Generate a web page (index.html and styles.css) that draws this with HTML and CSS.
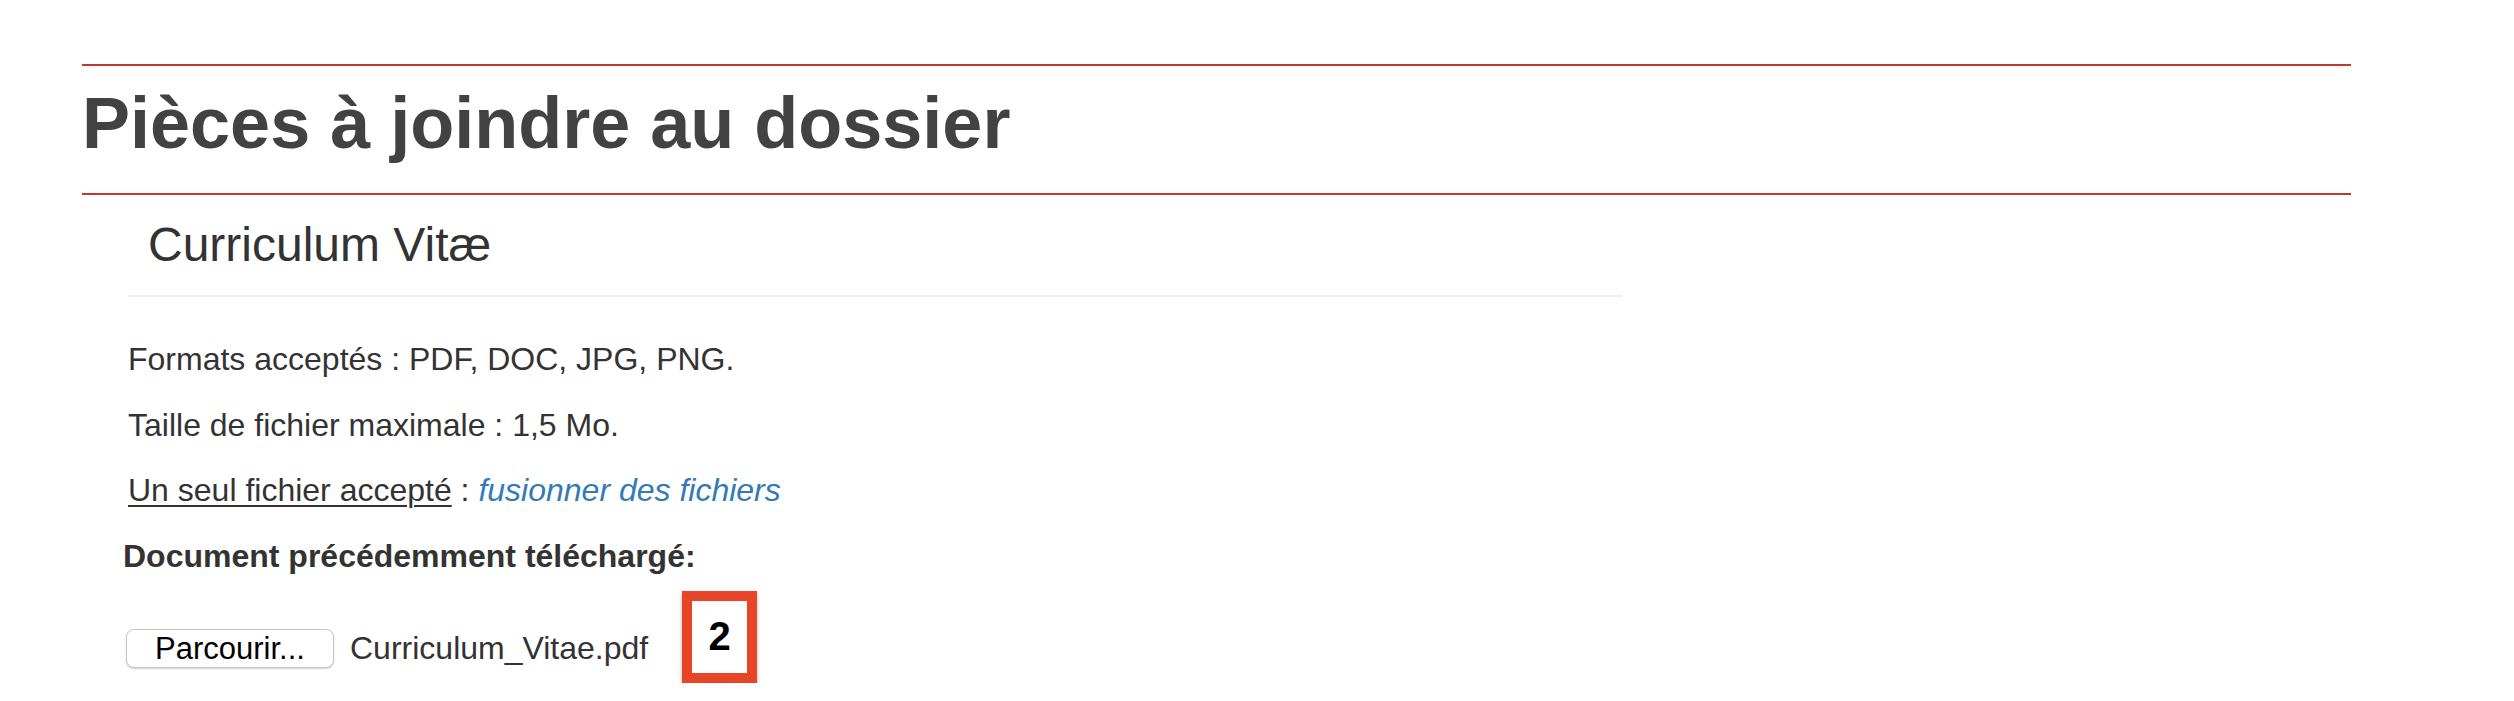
FILE: index.html
```html
<!DOCTYPE html>
<html lang="fr">
<head>
<meta charset="utf-8">
<title>Pièces à joindre au dossier</title>
<link rel="stylesheet" href="styles.css">
</head>
<body>
<div class="page">
  <section class="section">
    <h2 class="section-title">Pièces à joindre au dossier</h2>
    <div class="piece">
      <h3 class="piece-title">Curriculum Vitæ</h3>
      <p class="info">Formats acceptés : PDF, DOC, JPG, PNG.</p>
      <p class="info">Taille de fichier maximale : 1,5 Mo.</p>
      <p class="info"><span class="underlined">Un seul fichier accepté</span> : <a class="merge-link" href="#">fusionner des fichiers</a></p>
      <div class="label">Document précédemment téléchargé:</div>
      <div class="file-row">
        <button class="browse" type="button">Parcourir...</button>
        <span class="file-name">Curriculum_Vitae.pdf</span>
        <span class="badge">2</span>
      </div>
    </div>
  </section>
</div>
</body>
</html>
```
FILE: styles.css
```css
html, body {
  margin: 0;
  padding: 0;
  background: #ffffff;
}

body {
  font-family: "Liberation Sans", Arial, Helvetica, sans-serif;
  color: #333333;
}

.page {
  padding: 64px 0 0 82px;
}

.section {
  width: 2269px;
}

.section-title {
  margin: 0;
  border-top: 2px solid #c0392b;
  border-bottom: 2px solid #c0392b;
  padding: 17px 0 30px 0;
  font-size: 72px;
  line-height: 80px;
  font-weight: bold;
  color: #424242;
}

.piece {
  margin-left: 46px;
  width: 1494px;
}

.piece-title {
  margin: 24px 0 0 0;
  padding: 0 0 24px 20px;
  border-bottom: 2px solid #eeeeee;
  font-size: 48px;
  line-height: 52px;
  font-weight: normal;
  color: #333333;
}

.info {
  margin: 0 0 20px 0;
  font-size: 32px;
  line-height: 1.42857;
}

.piece-title + .info {
  margin-top: 40px;
}

.underlined {
  text-decoration: underline;
  text-underline-offset: 4px;
  text-decoration-thickness: 2px;
}

.merge-link {
  color: #337ab7;
  font-style: italic;
  text-decoration: none;
}

.label {
  margin: 4px 0 0 -5px;
  font-size: 32px;
  line-height: 1.42857;
  font-weight: bold;
}

.file-row {
  display: flex;
  align-items: flex-start;
  margin-top: 11px;
}

.browse {
  margin: 38px 0 0 -2px;
  width: 208px;
  height: 39px;
  padding: 0;
  box-sizing: border-box;
  border: 1px solid #c6c6c6;
  border-radius: 8px;
  background: #ffffff;
  box-shadow: 0 1px 2px rgba(0, 0, 0, 0.18);
  font-family: "Liberation Sans", Arial, Helvetica, sans-serif;
  font-size: 31px;
  line-height: 37px;
  color: #000000;
}

.file-name {
  margin: 35px 0 0 16px;
  font-size: 32px;
  line-height: 1.42857;
  color: #333333;
}

.badge {
  margin-left: 34px;
  width: 75px;
  height: 92px;
  box-sizing: border-box;
  border: 10px solid #e84427;
  background: #ffffff;
  box-shadow: 0 3px 4px rgba(0, 0, 0, 0.3);
  display: flex;
  align-items: center;
  justify-content: center;
  font-size: 40px;
  font-weight: bold;
  color: #000000;
}
```
